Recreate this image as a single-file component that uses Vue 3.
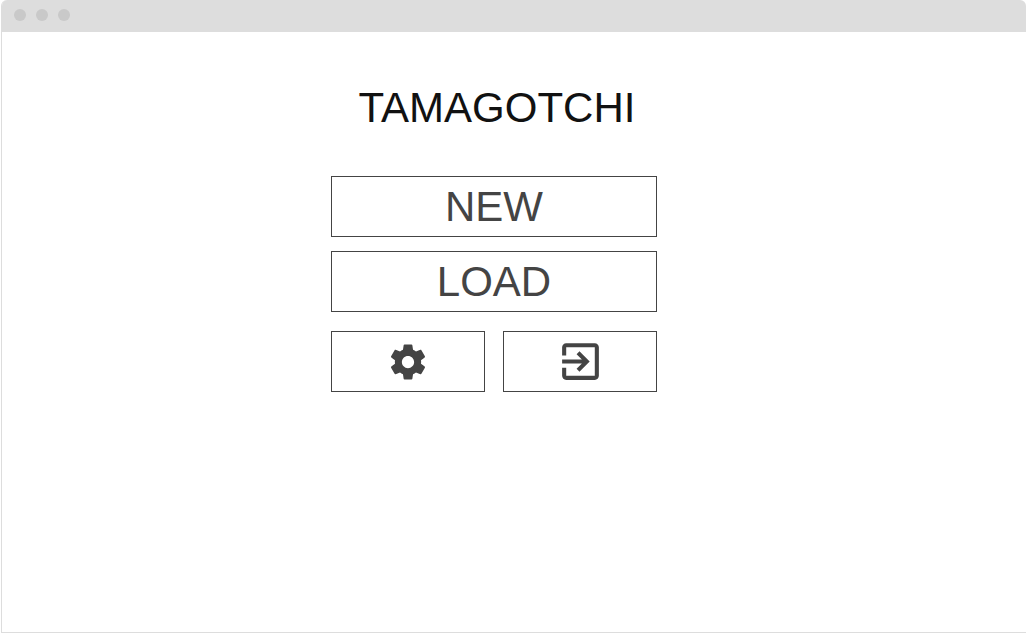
<script setup>
const entries = ['NEW', 'LOAD']
</script>

<template>
  <div class="window">
    <header class="titlebar">
      <span v-for="n in 3" :key="n" class="dot"></span>
    </header>
    <main class="content">
      <div class="menu">
        <h1 class="title">TAMAGOTCHI</h1>
        <div class="entries">
          <button v-for="entry in entries" :key="entry" type="button" class="btn">{{ entry }}</button>
        </div>
        <div class="tools">
          <button type="button" class="btn" aria-label="Settings">
            <svg class="gear" viewBox="0 0 24 24" aria-hidden="true">
              <path d="M19.43 12.98c.04-.32.07-.64.07-.98s-.03-.66-.07-.98l2.11-1.65c.19-.15.24-.42.12-.64l-2-3.46c-.12-.22-.39-.3-.61-.22l-2.49 1c-.52-.4-1.08-.73-1.69-.98l-.38-2.65C14.46 2.18 14.25 2 14 2h-4c-.25 0-.46.18-.49.42l-.38 2.65c-.61.25-1.17.59-1.69.98l-2.49-1c-.23-.09-.49 0-.61.22l-2 3.46c-.13.22-.07.49.12.64l2.11 1.65c-.04.32-.07.65-.07.98s.03.66.07.98l-2.11 1.65c-.19.15-.24.42-.12.64l2 3.46c.12.22.39.3.61.22l2.49-1c.52.4 1.08.73 1.69.98l.38 2.65c.03.24.24.42.49.42h4c.25 0 .46-.18.49-.42l.38-2.65c.61-.25 1.17-.59 1.69-.98l2.49 1c.23.09.49 0 .61-.22l2-3.46c.12-.22.07-.49-.12-.64l-2.11-1.65zM12 15.5c-1.93 0-3.5-1.57-3.5-3.5s1.57-3.5 3.5-3.5 3.5 1.57 3.5 3.5-1.57 3.5-3.5 3.5z" />
            </svg>
          </button>
          <button type="button" class="btn" aria-label="Exit">
            <svg class="exit" viewBox="0 0 24 24" aria-hidden="true">
              <path d="M10.09 15.59L11.5 17l5-5-5-5-1.41 1.41L12.67 11H3v2h9.67l-2.58 2.59zM19 3H5c-1.11 0-2 .9-2 2v4h2V5h14v14H5v-4H3v4c0 1.1.89 2 2 2h14c1.1 0 2-.9 2-2V5c0-1.1-.9-2-2-2z" />
            </svg>
          </button>
        </div>
      </div>
    </main>
  </div>
</template>

<style>
body {
  margin: 0;
  background: #fff;
}
</style>

<style scoped>
.window {
  box-sizing: border-box;
  min-height: 100vh;
  margin-left: 1px;
  border: 1px solid #ddd;
  border-width: 0 0 1px 1px;
  border-radius: 6px 6px 0 0;
  background: #fff;
  overflow: hidden;
  font-family: "Liberation Sans", Arial, sans-serif;
}

.titlebar {
  box-sizing: border-box;
  display: flex;
  align-items: center;
  gap: 10px;
  height: 32px;
  padding: 0 12px 2px;
  background: #ddd;
}

.dot {
  width: 12px;
  height: 12px;
  border-radius: 50%;
  background: #c9c9c9;
}

.content {
  display: flex;
  justify-content: center;
  padding: 52px 40px 40px 0;
}

.menu {
  width: 326px;
}

.title {
  margin: 0 0 44px;
  padding-left: 6px;
  font-size: 42px;
  font-weight: 400;
  line-height: 48px;
  text-align: center;
  color: #111;
}

.entries {
  display: grid;
  gap: 14px;
  margin-bottom: 19px;
}

.tools {
  display: grid;
  grid-template-columns: 1fr 1fr;
  gap: 18px;
}

.btn {
  box-sizing: border-box;
  display: flex;
  align-items: center;
  justify-content: center;
  height: 61px;
  margin: 0;
  padding: 0;
  border: 1px solid #444;
  background: #fff;
  color: #444;
  font-family: inherit;
  font-size: 42px;
  line-height: 48px;
  cursor: pointer;
}

.btn svg {
  display: block;
  fill: currentColor;
}

.gear {
  width: 42px;
  height: 42px;
}

.exit {
  width: 49px;
  height: 49px;
}
</style>
